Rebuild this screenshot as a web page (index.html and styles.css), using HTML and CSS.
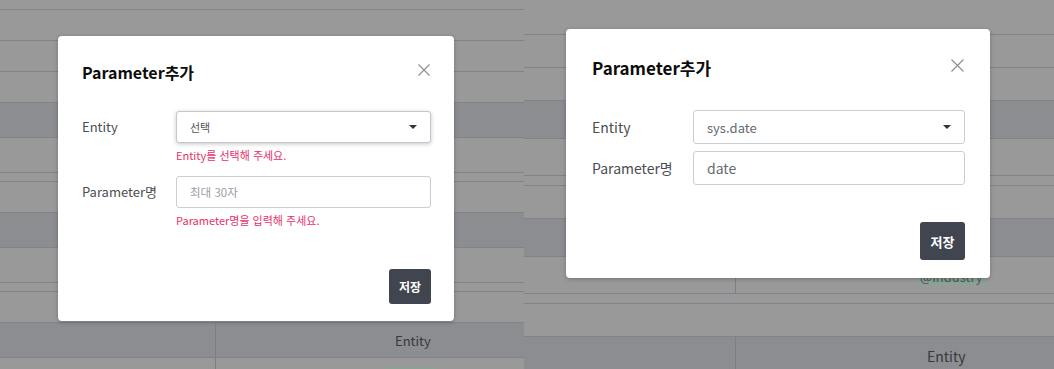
FILE: index.html
```html
<!DOCTYPE html>
<html lang="ko">
<head>
<meta charset="utf-8">
<title>Parameter추가</title>
<link rel="stylesheet" href="styles.css">
</head>
<body>
<div class="screens">
  <section class="panel panel-left">
    <div class="rows">
      <div class="row light h10"></div>
      <div class="row light h31"></div>
      <div class="row light h31"></div>
      <div class="row light h31"></div>
      <div class="row dark h35"></div>
      <div class="row light h35"></div>
      <div class="row light h9"></div>
      <div class="row light h31"></div>
      <div class="row dark h35"></div>
      <div class="row light h35"></div>
      <div class="row light h9"></div>
      <div class="row light h31"></div>
      <div class="row dark h35 cells">
        <div class="cell c1"></div>
        <div class="cell c2 head-text">Entity</div>
      </div>
      <div class="row light grow cells">
        <div class="cell c1"></div>
        <div class="cell c2 tag-cell"><span class="tag tag-left"></span></div>
      </div>
    </div>

    <div class="modal modal-a">
      <div class="modal-head">
        <h2 class="modal-title">Parameter추가</h2>
        <svg class="close" width="12" height="12" viewBox="0 0 12 12"><path d="M0.5 0.5 L11.5 11.5 M11.5 0.5 L0.5 11.5" stroke="#8d9096" stroke-width="1.2" fill="none"/></svg>
      </div>
      <div class="form">
        <div class="field">
          <label class="label">Entity</label>
          <div class="control">
            <div class="select focused"><span class="val placeholder-dark">선택</span><span class="caret"></span></div>
            <div class="error">Entity를 선택해 주세요.</div>
          </div>
        </div>
        <div class="field">
          <label class="label">Parameter명</label>
          <div class="control">
            <div class="input"><span class="val placeholder">최대 30자</span></div>
            <div class="error">Parameter명을 입력해 주세요.</div>
          </div>
        </div>
      </div>
      <div class="modal-foot"><button class="btn">저장</button></div>
    </div>
  </section>

  <section class="panel panel-right">
    <div class="rows">
      <div class="row light h35"></div>
      <div class="row light h33"></div>
      <div class="row light h33"></div>
      <div class="row dark h38"></div>
      <div class="row light h37"></div>
      <div class="row light h10"></div>
      <div class="row light h33"></div>
      <div class="row dark h38"></div>
      <div class="row light h37 cells">
        <div class="cell c1r"></div>
        <div class="cell c2r tag-cell-r"><span class="tag tag-right">@industry</span></div>
      </div>
      <div class="row light h10"></div>
      <div class="row light h33"></div>
      <div class="row dark grow cells">
        <div class="cell c1r"></div>
        <div class="cell c2r head-text-r">Entity</div>
      </div>
    </div>

    <div class="modal modal-b">
      <div class="modal-head">
        <h2 class="modal-title">Parameter추가</h2>
        <svg class="close" width="13" height="13" viewBox="0 0 13 13"><path d="M0.5 0.5 L12.5 12.5 M12.5 0.5 L0.5 12.5" stroke="#8d9096" stroke-width="1.2" fill="none"/></svg>
      </div>
      <div class="form">
        <div class="field">
          <label class="label">Entity</label>
          <div class="control">
            <div class="select"><span class="val">sys.date</span><span class="caret"></span></div>
          </div>
        </div>
        <div class="field">
          <label class="label">Parameter명</label>
          <div class="control">
            <div class="input"><span class="val val-lg">date</span></div>
          </div>
        </div>
      </div>
      <div class="modal-foot"><button class="btn">저장</button></div>
    </div>
  </section>
</div>
</body>
</html>
```

FILE: styles.css
```css
* { box-sizing: border-box; margin: 0; padding: 0; }

html, body {
  width: 1054px;
  height: 369px;
  overflow: hidden;
  background: #999999;
  font-family: "Noto Sans CJK KR", "Noto Sans", sans-serif;
}

.screens {
  display: flex;
  width: 1054px;
  height: 369px;
}

.panel {
  position: relative;
  height: 369px;
  overflow: hidden;
}
.panel-left { width: 524px; }
.panel-right { width: 530px; }

.rows {
  display: flex;
  flex-direction: column;
  height: 100%;
}

.row {
  flex: none;
  border-bottom: 1px solid #80838a;
}
.row.light { background: #999999; }
.row.dark { background: #8b8d91; }
.row.grow { flex: 1 1 auto; border-bottom: none; }

.h9 { height: 9px; }
.h10 { height: 10px; }
.h31 { height: 31px; }
.h33 { height: 33px; }
.h35 { height: 35px; }
.h37 { height: 37px; }
.h38 { height: 38px; }

.cells { display: flex; }
.cell { height: 100%; }
.c1 { width: 216px; border-right: 1px solid #7c7f86; }
.c2 { flex: 1; }
.c1r { width: 212px; border-right: 1px solid #7c7f86; }
.c2r { flex: 1; }

.head-text {
  padding-left: 179px;
  font-size: 13px;
  line-height: 35px;
  color: #36383c;
}
.head-text-r {
  padding-left: 191px;
  padding-top: 8px;
  font-size: 14px;
  line-height: 22px;
  color: #36383c;
}

.tag-cell {
  display: flex;
  align-items: flex-start;
  padding: 9px 0 0 169px;
}
.tag-cell-r {
  display: flex;
  align-items: flex-start;
  padding: 16px 0 0 181px;
}

.tag {
  display: block;
  background: #8aa395;
}
.tag-left { width: 51px; height: 14px; }
.tag-right {
  padding: 0 3px;
  height: 12px;
  font-size: 13px;
  line-height: 8px;
  color: #55585c;
  white-space: nowrap;
  overflow: visible;
}

/* modal */
.modal {
  position: absolute;
  background: #ffffff;
  border-radius: 4px;
  box-shadow: 0 1px 4px rgba(0, 0, 0, 0.25);
  display: flex;
  flex-direction: column;
  z-index: 1;
}

.modal-head {
  display: flex;
  justify-content: space-between;
  align-items: center;
}
.modal-title {
  font-weight: 700;
  color: #0d0d0d;
}

.form {
  display: flex;
  flex-direction: column;
}
.field {
  display: flex;
  align-items: flex-start;
}
.control { flex: 1; }

.label { color: #4a4d52; }

.select, .input {
  display: flex;
  align-items: center;
  justify-content: space-between;
  border: 1px solid #c9ced7;
  border-radius: 3px;
  background: #ffffff;
}
.select.focused {
  border-color: #c3c7cf;
  box-shadow: 0 1px 4px rgba(0, 0, 0, 0.22);
}

.val { color: #666a70; }
.placeholder-dark { color: #555; }
.placeholder { color: #9a9da2; }

.caret {
  width: 0;
  height: 0;
  border-left: 4px solid transparent;
  border-right: 4px solid transparent;
  border-top: 4px solid #333333;
}

.error {
  color: #e8306a;
}

.modal-foot {
  display: flex;
  justify-content: flex-end;
}
.btn {
  border: none;
  background: #40454f;
  color: #ffffff;
  font-family: inherit;
  font-weight: 700;
  border-radius: 3px;
}

/* left modal sizes */
.modal-a {
  left: 58px;
  top: 36px;
  width: 396px;
  height: 285px;
  padding: 24px 23px 17px 24px;
}
.modal-a .modal-title { font-size: 16px; line-height: 24px; }
.modal-a .close { margin-top: -4px; margin-right: 1px; }
.modal-a .form { margin-top: 27px; gap: 13px; }
.modal-a .label { width: 94px; font-size: 13px; line-height: 32px; }
.modal-a .select, .modal-a .input { height: 32px; padding: 0 13px 0 13px; }
.modal-a .val { font-size: 11px; }
.modal-a .input .val { font-size: 11.5px; }
.modal-a .error { margin-top: 4px; font-size: 11px; line-height: 16px; }
.modal-a .modal-foot { margin-top: 41px; }
.modal-a .btn { width: 42px; height: 35px; font-size: 12px; }

/* right modal sizes */
.modal-b {
  left: 42px;
  top: 29px;
  width: 424px;
  height: 249px;
  padding: 26px 25px 18px 26px;
}
.modal-b .modal-title { font-size: 17px; line-height: 26px; }
.modal-b .close { margin-top: -5px; margin-right: 1px; }
.modal-b .form { margin-top: 29px; gap: 7px; }
.modal-b .label { width: 101px; font-size: 14px; line-height: 34px; }
.modal-b .select, .modal-b .input { height: 34px; padding: 0 13px 0 13px; }
.modal-b .val { font-size: 13px; }
.modal-b .val-lg { font-size: 14px; }
.modal-b .modal-foot { margin-top: 37px; }
.modal-b .btn { width: 45px; height: 38px; font-size: 13px; }
```
